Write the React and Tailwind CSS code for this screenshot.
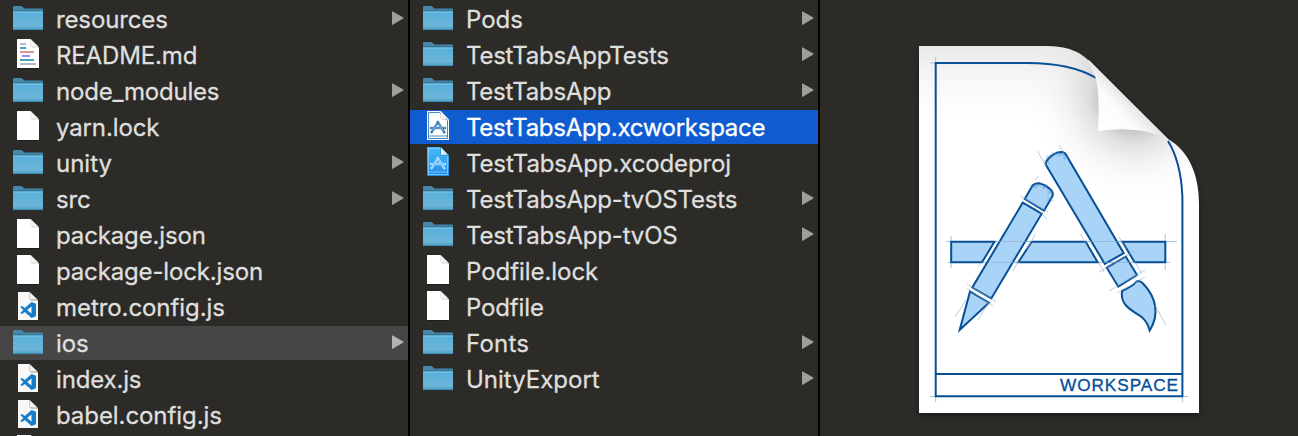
import React from "react";

const leftItems = [
  ["resources", "folder", "tracking-[-0.13px]"],
  ["README.md", "readme", "tracking-[-0.13px]"],
  ["node_modules", "folder", "tracking-[-0.21px]"],
  ["yarn.lock", "file", "tracking-[-0.13px]"],
  ["unity", "folder", "tracking-[0px]"],
  ["src", "folder", "tracking-[-0.1px]"],
  ["package.json", "file", "tracking-[-0.13px]"],
  ["package-lock.json", "file", "tracking-[-0.15px]"],
  ["metro.config.js", "code", "tracking-[-0.07px]"],
  ["ios", "folder", "tracking-[-0.1px]"],
  ["index.js", "code", "tracking-[-0.17px]"],
  ["babel.config.js", "code", "tracking-[-0.07px]"],
  ["", "file", ""],
];

const middleItems = [
  ["Pods", "folder", "tracking-[-0.05px]"],
  ["TestTabsAppTests", "folder", "tracking-[-0.24px]"],
  ["TestTabsApp", "folder", "tracking-[-0.25px]"],
  ["TestTabsApp.xcworkspace", "workspace", "tracking-[-0.28px]"],
  ["TestTabsApp.xcodeproj", "project", "tracking-[-0.13px]"],
  ["TestTabsApp-tvOSTests", "folder", "tracking-[-0.18px]"],
  ["TestTabsApp-tvOS", "folder", "tracking-[-0.18px]"],
  ["Podfile.lock", "file", "tracking-[-0.05px]"],
  ["Podfile", "file", "tracking-[-0.15px]"],
  ["Fonts", "folder", "tracking-[0.2px]"],
  ["UnityExport", "folder", "tracking-[0px]"],
];

function Folder() {
  return (
    <>
      <path d="M0 28V5.2Q0 4 1.2 4H8.2Q9 4 9.6 4.8L11.3 6.6H29Q30 6.6 30 7.8V28Z" fill="#4487ab" />
      <path d="M0 8.4H30V10H0Z" fill="#2d6685" />
      <path d="M0 9.6H30V26.8Q30 28 29 28H1Q0 28 0 26.8Z" fill="url(#folderFace)" />
      <path d="M0 10H30" stroke="#8bd0ed" strokeWidth="0.9" />
      <path d="M0.3 27.6H29.7" stroke="#3a86aa" strokeWidth="0.8" />
    </>
  );
}

function Page() {
  return (
    <>
      <path d="M4 30.4H26V31H4Z" fill="#151513" />
      <path d="M4 1H17.5L26 9.5V30H4Z" fill="#fff" />
      <path d="M17.5 1L26 9.5H19L17.5 8Z" fill="#d2d2d2" />
      <path d="M17.6 1.2L25.3 8.6H18Z" fill="#f4f4f4" />
    </>
  );
}

function Readme() {
  return (
    <>
      <Page />
      <g strokeWidth="1.9">
        <path d="M7 6H13M7 26H23" stroke="#b5bbc2" />
        <path d="M7 10H13M7 22H21" stroke="#4aa5b2" />
        <path d="M7 14H21" stroke="#db9098" />
        <path d="M9 18H17" stroke="#a680f4" />
      </g>
    </>
  );
}

function Code() {
  return (
    <>
      <path d="M5 2H16.5L25 10.5V30H5Z" fill="#f7f7f7" />
      <path d="M16.5 2L25 10.5H18L16.5 9Z" fill="#9d9d9d" />
      <path d="M17 2.5L24.5 9.5H17Z" fill="#f1f1f1" />
      <path
        d="M18.6 12L23 13.8V26.2L18.6 28L11.8 22L8.9 24.1L7.2 23.1L10.3 20L7.2 16.9L8.9 15.9L11.8 18ZM18.5 16.6L14.1 20L18.5 23.4Z"
        fill="#167ccc"
        fillRule="evenodd"
      />
    </>
  );
}

function Blueprint({ project }) {
  const ink = project ? "#bce4fd" : "#2c6fac";
  return (
    <>
      <path d="M4 1H17.5L26 9.5V30H4Z" fill={project ? "url(#projectFace)" : "#fff"} />
      <path d="M5.5 2.5H16.5L24.5 10.5V28.5H5.5ZM5.5 26H24.5" fill="none" stroke={project ? "#7ccbff" : "#337bb9"} strokeWidth="0.9" />
      <path d="M17.5 1L26 9.5H19L17.5 8Z" fill={project ? "#3475a5" : "#bdbdbd"} />
      <path d="M18 1.5L25 8.7H18Z" fill={project ? "#dff3ff" : "#f4f4f4"} />
      <g fill="none" stroke={ink} strokeWidth="2.3">
        <path d="M7 18H23" />
        <path d="M15.2 12L8 23.2M14.2 11L21.8 23.2" />
      </g>
      <path d="M8 18H22M14 14L9 21.5M15.2 12.7L20.8 21.7" stroke={project ? "#4eb5fa" : "#a4cff2"} strokeWidth="0.7" fill="none" />
    </>
  );
}

function FileIcon({ kind }) {
  return (
    <svg className="h-[34px] w-[30px] shrink-0 overflow-visible" viewBox="0 0 30 34">
      {kind === "folder" && <Folder />}
      {kind === "file" && <Page />}
      {kind === "readme" && <Readme />}
      {kind === "code" && <Code />}
      {kind === "workspace" && <Blueprint />}
      {kind === "project" && <Blueprint project />}
    </svg>
  );
}

function Column({ items, selected, selectedClass }) {
  return (
    <ul className="flex h-full w-[408px] shrink-0 flex-col gap-[2px] overflow-hidden pt-[2px]">
      {items.map(([name, kind, tracking], i) => (
        <li
          key={i}
          className={`flex h-[34px] w-full shrink-0 items-center pr-[4px] pl-[13px] ${i === selected ? selectedClass : "text-[#dfdfde]"}`}
        >
          <FileIcon kind={kind} />
          <span className={`ml-[13px] grow whitespace-nowrap pt-px text-[24px] leading-[33px] [-webkit-text-stroke:0.3px_currentColor] ${tracking}`}>{name}</span>
          {kind === "folder" && (
            <svg className="h-[34px] w-[12px] shrink-0" viewBox="0 0 12 34">
              <path d="M0.7 9.5L11.3 15.6Q12 16 11.3 16.5L0.7 22.8Q0 23.2 0 22.4V9.9Q0 9.1 0.7 9.5Z" fill={i === selected ? "#b3b3b3" : "#9e9e9c"} />
            </svg>
          )}
        </li>
      ))}
    </ul>
  );
}

function CapMarks({ points }) {
  return (
    <g fill="none" stroke="#4d88bd" strokeWidth="0.6" opacity="0.65">
      {points.map(([x, y], i) => (
        <path key={i} d={`M${x - 3} ${y - 2}l6 4M${x - 2} ${y + 3}l4 -6M${x - 3} ${y + 1}l6 -2`} />
      ))}
    </g>
  );
}

function WorkspacePreview() {
  return (
    <svg className="h-[400px] w-[320px] overflow-visible" viewBox="900 30 320 400">
      <defs>
        <linearGradient id="sheet" x1="0" y1="0" x2="0" y2="1">
          <stop offset="0" stopColor="#e9e9e9" />
          <stop offset="0.1" stopColor="#f8f8f8" />
          <stop offset="0.2" stopColor="#fff" />
        </linearGradient>
        <linearGradient id="curl" gradientUnits="userSpaceOnUse" x1="1100" y1="129" x2="1134" y2="97">
          <stop offset="0" stopColor="#fff" />
          <stop offset="0.58" stopColor="#fbfbfb" />
          <stop offset="1" stopColor="#dedede" />
        </linearGradient>
        <radialGradient id="foldShade" gradientUnits="userSpaceOnUse" cx="0" cy="0" r="1" gradientTransform="translate(1131 101) rotate(43) scale(108 100)">
          <stop offset="0.2" stopColor="#777" stopOpacity="0.56" />
          <stop offset="0.4" stopColor="#888" stopOpacity="0.27" />
          <stop offset="0.62" stopColor="#aaa" stopOpacity="0.13" />
          <stop offset="1" stopColor="#fff" stopOpacity="0" />
        </radialGradient>
        <filter id="pageShadow" x="-10%" y="-10%" width="120%" height="120%">
          <feDropShadow dx="0" dy="3" stdDeviation="3" floodColor="#000" floodOpacity="0.4" />
        </filter>
      </defs>
      <path d="M919 46H1043C1068 46 1080 51 1092 64L1168 139C1189 151 1199 175 1199 204V413H919Z" fill="url(#sheet)" filter="url(#pageShadow)" />
      <path d="M919 46H1043C1068 46 1080 51 1092 64L1168 139C1189 151 1199 175 1199 204V413H919Z" fill="url(#foldShade)" />

      <g fill="none" stroke="#9abddd" strokeWidth="0.9">
        <path d="M930 63H937M935.7 57V65M930 396.5H1188M935.7 391V402M1182.4 391V402" />
        <path d="M946 241.5H1177M948 262.4H1170M951.2 236V268M1165.2 234V270" />
      </g>
      <g fill="none" stroke="#074f97" strokeWidth="2">
        <path d="M1096 78Q1071 63 1027 63H935.7V396.3H1182.4V197Q1181 162 1168 141" />
        <path d="M935.7 374H1182.4" />
      </g>

      <g fill="#aad4f7" stroke="#074f97" strokeWidth="2">
        <path d="M951.2 241.7H994.5L982 262.3H951.2Z" />
        <path d="M1031.7 241.7H1085.7L1097.7 262.3H1018.3Z" />
        <path d="M1122.3 241.7H1165.3V262.3H1134.7Z" />
        <path d="M1045.8 164.7C1045.6 158.5 1055.5 151.5 1062.5 152Q1065 152.5 1066.5 155.5L1123.7 253.2L1104.7 263.8Z" />
        <path d="M1106.7 267.7L1125.7 256.5L1137 275L1118.3 286.7Z" />
        <path d="M1122 291Q1133 286 1136 282Q1139 279.5 1143 283.5C1156 297 1160 314 1149.7 330.5Q1147 321 1141 316.5C1131 310 1120 305 1122 291Z" />
        <path d="M1024.7 199L1032.5 185.5Q1035 182.8 1039 183.2Q1046.5 185 1051.5 190.5Q1053.5 193 1052.5 196L1044 210.7Z" />
        <path d="M1022.7 202.7L1041.7 213.7L991.3 298.5L972.3 287.5Z" />
        <path d="M970 291.5L989 302.7L959.7 330Z" />
      </g>
      <g fill="none" stroke="#86acd1" strokeWidth="0.8" opacity="0.75">
        <path d="M990 262.4H1020M995 241.5H1031M1086 241.5H1122M1098 262.4H1135" />
        <path d="M1037.5 151L1046 166M1059 145L1064 153M1035 180L1038.5 176M1020 196L1048 212M1039 211L1047 219" />
        <path d="M967 284L996 302M967 288L993 306M1035.5 234L1027 249M1018 262L1013 271M982 262L978 267" />
        <path d="M1080.5 234L1087 246M1098 262L1104 272M1099 272L1134 251M1119 237L1126 249M1135 262L1142 274M1109 291L1145 270M1117 293L1145 277M1155 305L1166 325M966 300L955 317M989 302L978 320" />
      </g>
      <CapMarks points={[[1047, 162], [1049, 157], [1055, 154], [1061, 154], [1066, 157], [1033, 187], [1038, 185], [1045, 187], [1050, 192], [1050, 199]]} />

      <path d="M1089 60L1168 139.5Q1142 125 1098 131Q1100 91 1095 76Q1092 68 1088 60Z" fill="url(#curl)" />
      <path d="M1090 62L1168 139.5" fill="none" stroke="#fff" strokeOpacity="0.7" strokeWidth="0.7" />
      <text x="1060" y="391.4" textLength="118" fill="#074f97" stroke="#074f97" strokeWidth="0.35" fontSize="17.2" fontFamily="Liberation Sans, sans-serif">WORKSPACE</text>
    </svg>
  );
}

export default function App() {
  return (
    <main className="flex h-[436px] w-[1298px] overflow-hidden bg-[#2c2b28] font-['Inter',sans-serif]">
      <svg className="absolute h-0 w-0" aria-hidden="true">
        <defs>
          <linearGradient id="folderFace" x1="0" y1="0" x2="0" y2="1">
            <stop offset="0" stopColor="#57afda" />
            <stop offset="0.75" stopColor="#6cb5d8" />
            <stop offset="1" stopColor="#4c9dc0" />
          </linearGradient>
          <linearGradient id="projectFace" x1="0" y1="0" x2="0" y2="1">
            <stop offset="0" stopColor="#49bdf7" />
            <stop offset="1" stopColor="#248bee" />
          </linearGradient>
        </defs>
      </svg>
      <Column items={leftItems} selected={9} selectedClass="bg-[#464646] text-[#dfdfdf]" />
      <div className="w-[2px] shrink-0 bg-black" />
      <Column items={middleItems} selected={3} selectedClass="bg-[#0f5bd0] text-white" />
      <div className="w-[2px] shrink-0 bg-black" />
      <section className="grow pt-[30px] pl-[80px]">
        <WorkspacePreview />
      </section>
    </main>
  );
}
